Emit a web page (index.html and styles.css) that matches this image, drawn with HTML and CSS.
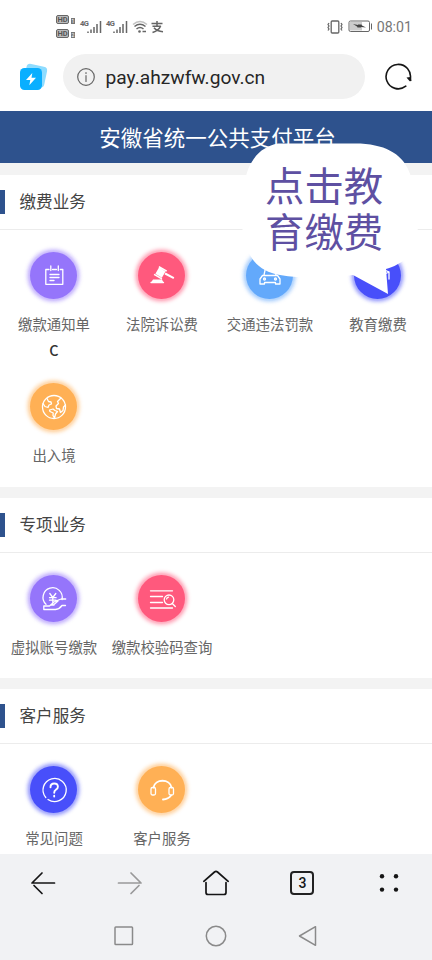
FILE: index.html
```html
<!DOCTYPE html>
<html lang="zh-CN">
<head>
<meta charset="utf-8">
<meta name="viewport" content="width=device-width, initial-scale=1">
<title>安徽省统一公共支付平台</title>
<link rel="stylesheet" href="styles.css">
</head>
<body>
<div class="phone">
  <div class="status">
    <div class="hd"><div class="hd-row"><b>HD</b><i>1</i></div><div class="hd-row"><b>HD</b><i>2</i></div></div>
    <div class="signal"><span>4G</span><svg width="15" height="14" viewBox="0 0 15 14"><path d="M1 11.500v1.500M4 9.500v3.500M7 7v6M10 4v9M13.500 1v12"/></svg></div>
    <div class="signal"><span>4G</span><svg width="15" height="14" viewBox="0 0 15 14"><path d="M1 11.500v1.500M4 9.500v3.500M7 7v6M10 4v9M13.500 1v12"/></svg></div>
    <svg class="wifi" width="16" height="14" viewBox="0 0 16 14"><path d="M1 4.500q7-6 14 0" opacity=".4"/><path d="M2.500 6.500q5.500-4.500 11 0M4.500 9q3.500-3 7 0"/><circle cx="7.500" cy="11.500" r="1.300"/><path d="M10.500 11.500h3.500"/></svg>
    <svg class="zhi" width="14" height="14" viewBox="0 0 14 14"><path d="M1.500 3.500h11M7 1v5M2.500 6.200h8q-1.500 4-8 6.300M4 7.800q3 3.500 9 4"/></svg>
    <svg class="vibrate" width="18" height="14" viewBox="0 0 18 14"><rect x="5.200" y="1" width="7.600" height="12" rx="1"/><path d="M3 3l-1 1.500 1 1.500-1 1.500L3 9l-1 1.500M15 3l1 1.500L15 6l1 1.500L15 9l1 1.500"/></svg>
    <svg class="battery" width="25" height="13" viewBox="0 0 25 13"><rect x="1" y="1" width="20.500" height="10.500" rx="1.500"/><path class="charge" d="M2 2h12v8.500H2z"/><path class="bolt" d="M5 4l5 1 1-1 1 1 1-1 1 1.500 4 2-5-.5-1 1-1-1-1 1-1-1.500z"/><path d="M23.500 3.500v6"/></svg>
    <span class="time">08:01</span>
  </div>

  <div class="address">
    <svg class="logo" width="29" height="28" viewBox="0 0 29 28"><rect x="6" y="2" width="21" height="21" rx="4" fill="#8edcff" transform="rotate(12 16 12)"/><rect x="1" y="5" width="22" height="22" rx="4.500" fill="#0aafff"/><path d="M13.300 10L7 17h4.300l-1 5.300 6.700-7.500h-4.500z" fill="#fff"/></svg>
    <div class="pill">
      <svg width="18" height="18" viewBox="0 0 18 18"><circle cx="9" cy="9" r="8.300"/><path d="M9 7.700v5.800M9 4.500v1"/></svg>
      <span>pay.ahzwfw.gov.cn</span>
    </div>
    <svg class="reload" width="28" height="28" viewBox="0 0 28 28"><path d="M21.800 23.200a12.200 12.200 0 1 1 4.400-7"/><path class="tip" d="M22.500 14.500l4.500-.5.500 4-1.800.3z"/></svg>
  </div>

  <header class="banner">安徽省统一公共支付平台</header>

  <main>
    <section class="fees">
      <h2>缴费业务</h2>
      <div class="grid">
        <div class="item">
          <span class="disc purple"><svg width="30" height="30" viewBox="0 0 30 30"><path d="M10 8.500H6.800v14.800h17V8.500h-2.500M13.500 8.500h4M11.800 5v4.500M19.300 5v4.500M11 13.500h9M11 16.500h9M11 19.500h4"/></svg></span>
          <div class="label">缴款通知单<em>C</em></div>
        </div>
        <div class="item">
          <span class="disc red"><svg width="30" height="30" viewBox="0 0 30 30"><path class="solid" d="M12 6.500l6.500 4-3.600 6.200-6.500-4zM12.300 5l7.800 4.500-.8 1.300-7.800-4.500zM7.500 12.700l7.800 4.500-.8 1.200-7.800-4.500zM18.500 11.500l8.800 4.700-.9 1.900-8.800-4.600zM6 18.500h9l1.500 3H4z"/><path d="M4 21.500h12.500"/></svg></span>
          <div class="label">法院诉讼费</div>
        </div>
        <div class="item">
          <span class="disc sky"><svg width="30" height="30" viewBox="0 0 30 30"><path d="M9 14l1.500-7h9L21 14M7.500 14.500h15l2.500 3.500v5h-4.500V21.500h-11V23H5v-5z"/><circle cx="9.500" cy="18" r="1"/><circle cx="20.500" cy="18" r="1"/></svg></span>
          <div class="label">交通违法罚款</div>
        </div>
        <div class="item">
          <span class="disc blue"><svg width="30" height="30" viewBox="0 0 30 30"><path d="M4 11l11-5 11 5-11 5zM8 14v6q7 4 14 0v-6M26 11v7"/></svg></span>
          <div class="label">教育缴费</div>
        </div>
        <div class="item">
          <span class="disc orange"><svg width="30" height="30" viewBox="0 0 30 30"><circle cx="15" cy="15" r="11.500"/><path d="M8 6.500l1.500 3 2.500.5.500 2-2.500 1-1 2.500-3-1-2-3M10.500 18l3.500-1 2 1.500 2.500 1-2 2.500-1 4-1.500-2.500.2-2.500-3.200-1.500zM22 6l-3.500 3.500 1 2-2.500 2.500.5 2.500 3 .5 1 3.500 2.500-2 .5-3.500 2-2"/></svg></span>
          <div class="label">出入境</div>
        </div>
      </div>
    </section>

    <section class="special">
      <h2>专项业务</h2>
      <div class="grid">
        <div class="item">
          <span class="disc purple"><svg width="30" height="30" viewBox="0 0 30 30"><path d="M7 20.300A9.600 9.600 0 1 1 23 15.500M10.800 9.500l3 4 3-4M13.800 13.500v6M10.500 13.700h6.600M10.500 16.200h6.600M4.800 22h5.700l4.500-4q4-2 7.200-3h4.500M15 20.500l4-3.500M4.800 25.500h11.700q4-.5 6.500-4h3.500M15 21h-3.500M4.800 22v3.500"/></svg></span>
          <div class="label">虚拟账号缴款</div>
        </div>
        <div class="item">
          <span class="disc red"><svg width="30" height="30" viewBox="0 0 30 30"><path d="M3.500 6.800h22M3.500 12.500h12M3.500 18.500h12M3.500 24h22"/><circle cx="22" cy="15.800" r="4.800"/><path d="M25.300 19.500l3 3M19.500 15a3 3 0 0 1 2-1.800"/></svg></span>
          <div class="label">缴款校验码查询</div>
        </div>
      </div>
    </section>

    <section class="service">
      <h2>客户服务</h2>
      <div class="grid">
        <div class="item">
          <span class="disc blue"><svg width="30" height="30" viewBox="0 0 30 30"><path d="M6.800 22.500A11.600 11.600 0 1 1 9 24.500"/><path class="bold" d="M11.500 12.200q0-3.700 3.700-3.700t3.700 3.300q0 1.800-2 2.900-1.700 1-1.700 3M15.200 20.800v.8"/></svg></span>
          <div class="label">常见问题</div>
        </div>
        <div class="item">
          <span class="disc orange"><svg width="30" height="30" viewBox="0 0 30 30"><path class="bold" d="M6.500 12.500C8 3.500 23 3.500 24.500 12.500M24 20.500q-2.500 3.500-8 4"/><rect x="4" y="12.500" width="4.500" height="7.500" rx="1.500"/><rect x="22" y="12.500" width="4.500" height="7.500" rx="1.500"/></svg></span>
          <div class="label">客户服务</div>
        </div>
      </div>
    </section>
  </main>

  <nav class="toolbar">
    <svg width="26" height="26" viewBox="0 0 26 26"><path d="M24.500 13H2L12 3M4 15.500L12 23.500"/></svg>
    <svg class="muted" width="26" height="26" viewBox="0 0 26 26"><path d="M1.500 13H24L14 3M22 15.500L14 23.500"/></svg>
    <svg width="28" height="28" viewBox="0 0 28 28"><path d="M1.800 12.300L12.500 3q1.500-1.200 3 0l10.700 9.300M4 13.500v10q0 2 2 2h16q2 0 2-2v-10"/></svg>
    <span class="tabs">3</span>
    <svg class="dots" width="26" height="26" viewBox="0 0 26 26"><circle cx="6" cy="6.200" r="2.200"/><circle cx="20" cy="6.200" r="2.200"/><circle cx="6" cy="19.600" r="2.200"/><circle cx="20" cy="19.600" r="2.200"/></svg>
  </nav>
  <div class="system">
    <svg width="22" height="22" viewBox="0 0 22 22"><rect x="2" y="2" width="17.500" height="17.500" rx=".8"/></svg>
    <svg width="22" height="22" viewBox="0 0 22 22"><circle cx="11" cy="11" r="9.700"/></svg>
    <svg width="22" height="22" viewBox="0 0 22 22"><path d="M2.500 11L18.500 1.700v18.600z"/></svg>
  </div>

  <div class="bubble">
    <svg width="178" height="153" viewBox="241 142 178 153"><path d="M278 143.500H355C385 143.500 401 154 408 169C414 182 418 204 418 223C418 243 412 257 398 264C393 267 389 268 386 269L388 294L353 275C334 278 302 279 280 275C263 272 252 263 247 248C240 229 240 205 244 185C248 160 260 147 278 143.500Z"/></svg>
    <p>点击教<br>育缴费</p>
  </div>
</div>
</body>
</html>
```
FILE: styles.css
```css
* {
  box-sizing: border-box;
}

body {
  margin: 0;
  background: #fff;
  font-family: Roboto, "Noto Sans CJK SC", sans-serif;
}

svg {
  display: block;
  flex: none;
  fill: none;
  stroke-linecap: round;
  stroke-linejoin: round;
}

.phone {
  position: relative;
  width: 432px;
  height: 960px;
  overflow: hidden;
  display: flex;
  flex-direction: column;
}

/* Status bar */
.status {
  height: 52px;
  padding: 1px 20px 0 56px;
  display: flex;
  align-items: center;
  color: #666;
}

.status svg {
  stroke: #666;
  stroke-width: 1.5;
  stroke-linecap: butt;
}

.hd {
  display: grid;
  gap: 5px;
  width: 24px;
}

.hd-row {
  display: flex;
  align-items: center;
  gap: 2px;
  height: 9px;
}

.hd b {
  width: 13px;
  height: 9px;
  border: 1px solid #666;
  border-radius: 2px;
  background: #bbb;
  color: #555;
  font-size: 7.5px;
  line-height: 7px;
  text-align: center;
}

.hd i {
  width: 4px;
  height: 6px;
  margin-top: 2px;
  background: #777;
  color: #fff;
  font-size: 5px;
  line-height: 6px;
  font-style: normal;
  text-align: center;
}

.signal {
  display: flex;
  align-items: center;
  width: 26px;
}

.signal span {
  width: 7px;
  font-size: 7.5px;
  font-weight: 700;
  letter-spacing: -.5px;
  margin-top: -6px;
}

.wifi circle {
  fill: #666;
  stroke: none;
}

.zhi {
  margin-left: 2px;
}

.status .vibrate {
  margin-left: auto;
  stroke-width: 1.3;
}

.status .battery {
  margin-left: 4px;
  stroke-width: 1;
}

.battery .charge {
  fill: #ccc;
  stroke: none;
}

.battery .bolt {
  fill: #444;
  stroke: none;
}

.time {
  margin-left: 4px;
  font-size: 14.2px;
  color: #777;
}

/* Address bar */
.address {
  height: 58.5px;
  padding: 2px 19px 11.500px 19px;
  display: flex;
  align-items: center;
}

.pill {
  width: 302px;
  height: 45px;
  margin-left: 15px;
  padding-left: 14px;
  border-radius: 23px;
  background: #f1f1f1;
  display: flex;
  align-items: center;
  gap: 10.5px;
  font-size: 19.2px;
  color: #262626;
}

.pill span {
  padding-top: 1px;
}

.pill svg {
  stroke: #666;
  stroke-width: 1.2;
}

.reload {
  margin-left: 19px;
  stroke: #151515;
  stroke-width: 1.6;
}

.reload .tip {
  fill: #151515;
  stroke: none;
}

/* Page content */
.banner {
  height: 52.5px;
  padding-left: 3px;
  background: #2e528d;
  color: #fff;
  font-size: 21.5px;
  line-height: 56px;
  text-align: center;
}

main {
  height: 691px;
  padding-top: 12px;
  overflow: hidden;
  display: flex;
  flex-direction: column;
  gap: 11px;
  background: #f3f3f3;
}

section {
  flex: none;
  background: #fff;
}

.fees {
  height: 312px;
}

.special {
  height: 180px;
}

.service {
  height: 180px;
}

h2 {
  height: 55px;
  margin: 0;
  padding-left: 19.5px;
  border-bottom: 1px solid #ececec;
  background: linear-gradient(#2e528d, #2e528d) 0 15px / 5px 24px no-repeat;
  color: #444;
  font-size: 16.6px;
  font-weight: 400;
  line-height: 56px;
}

.grid {
  display: grid;
  grid-template-columns: repeat(4, 108px);
}

.item {
  padding-top: 22px;
  display: flex;
  flex-direction: column;
  align-items: center;
}

.item:nth-child(n + 5) {
  padding-top: 20px;
}

.disc {
  width: 47px;
  height: 47px;
  margin-right: 1px;
  border-radius: 50%;
  display: grid;
  place-items: center;
  background: var(--tone);
  box-shadow:
    0 0 2px 2px color-mix(in srgb, var(--tone) 30%, transparent),
    0 0 3px 4px color-mix(in srgb, var(--tone) 25%, transparent);
}

.disc svg {
  stroke: #fff;
  stroke-width: 1.3;
}

.disc .bold {
  stroke-width: 1.9;
}

.disc .solid {
  fill: #fff;
  stroke: none;
}

.purple { --tone: #9575fb; }
.red { --tone: #ff597d; }
.sky { --tone: #63a9fb; }
.blue { --tone: #484ffa; }
.orange { --tone: #ffb055; }

.label {
  margin-top: 14px;
  color: #666;
  font-size: 14.4px;
  line-height: 26px;
  text-align: center;
  white-space: nowrap;
}

.label em {
  display: block;
  margin-top: -2px;
  color: #333;
  font-family: "Noto Sans CJK SC", sans-serif;
  font-style: normal;
  font-weight: 500;
}

/* Speech bubble */
.bubble {
  position: absolute;
  left: 241px;
  top: 142px;
}

.bubble path {
  fill: #fff;
}

.bubble p {
  position: absolute;
  left: 24px;
  top: 23px;
  margin: 0;
  color: #5e50a2;
  font-size: 39.4px;
  line-height: 46px;
  white-space: nowrap;
}

/* Browser toolbar and system keys */
.toolbar {
  height: 58px;
  display: grid;
  grid-template-columns: repeat(5, 86.4px);
  place-items: center;
  background: #f1f2f4;
}

.toolbar svg {
  stroke: #151515;
  stroke-width: 1.7;
}

.toolbar .muted {
  stroke: #999;
}

.toolbar .dots {
  fill: #151515;
  stroke: none;
}

.tabs {
  width: 24px;
  height: 24px;
  border: 2px solid #222;
  border-radius: 4px;
  color: #151515;
  font-size: 14px;
  font-weight: 500;
  line-height: 21px;
  text-align: center;
}

.system {
  flex: 1;
  padding: 13px 113px 0;
  display: flex;
  justify-content: space-between;
  align-items: flex-start;
  background: #f1f2f4;
}

.system svg {
  stroke: #8a8a8a;
  stroke-width: 1.5;
}
```
